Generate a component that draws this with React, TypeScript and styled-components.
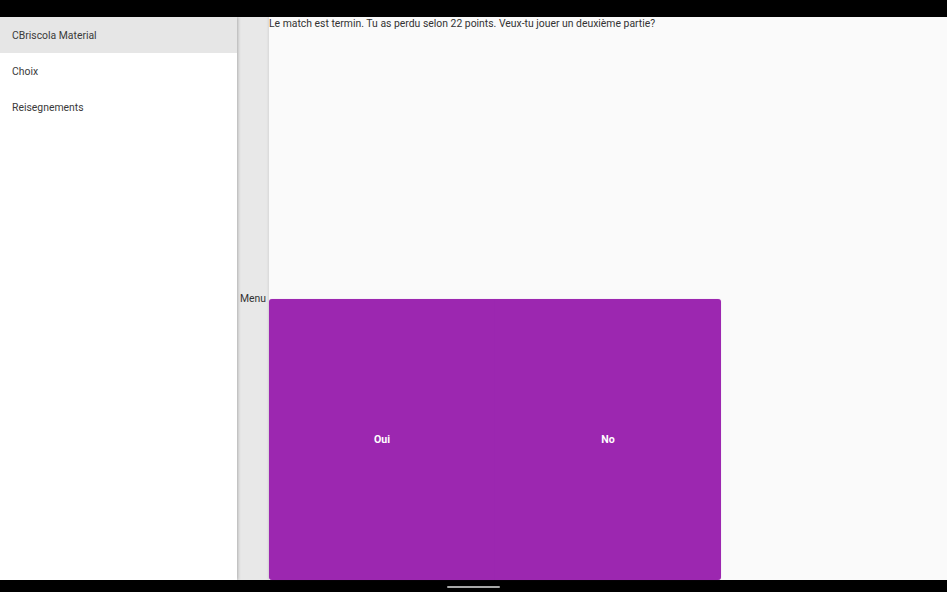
import { createGlobalStyle } from "styled-components";
import styled from "styled-components";

const GlobalStyle = createGlobalStyle`
  html, body {
    margin: 0;
    padding: 0;
    background: #000;
    font-family: Roboto, "Noto Sans", sans-serif;
  }
`;

const Screen = styled.div`
  width: 947px;
  height: 592px;
  display: flex;
  flex-direction: column;
  background: #000;
  overflow: hidden;
`;

const StatusBar = styled.div`
  height: 17px;
  background: #000;
`;

const Body = styled.div`
  flex: 1;
  display: flex;
  min-height: 0;
`;

const Drawer = styled.nav`
  width: 237px;
  background: #fff;
  display: flex;
  flex-direction: column;
  box-shadow: 1px 0 3px rgba(0, 0, 0, 0.25);
  position: relative;
  z-index: 2;
`;

const DrawerItem = styled.div<{ active?: boolean }>`
  height: 36px;
  display: flex;
  align-items: center;
  padding-left: 12px;
  font-size: 10.4px;
  color: #3a3a3a;
  background: ${(p) => (p.active ? "#e6e6e6" : "#fff")};
`;

const Strip = styled.div`
  width: 32px;
  background: #e8e8e8;
  display: flex;
  align-items: center;
  justify-content: flex-end;
  padding-right: 3px;
  box-sizing: border-box;
  font-size: 10.4px;
  color: #333;
`;

const Main = styled.main`
  flex: 1;
  background: #fafafa;
  display: flex;
  flex-direction: column;
  box-shadow: -1px 0 2px rgba(0, 0, 0, 0.08);
  position: relative;
  z-index: 1;
`;

const Message = styled.div`
  flex: 1;
  font-size: 10.4px;
  line-height: 13px;
  color: #333;
`;

const ButtonRow = styled.div`
  flex: 1;
  width: 452px;
  display: flex;
`;

const Choice = styled.button<{ side: "left" | "right" }>`
  flex: 1;
  border: none;
  margin: 0;
  background: #9c27b0;
  color: #fff;
  font-family: Roboto, "Noto Sans", sans-serif;
  font-weight: 700;
  font-size: 10.6px;
  border-radius: ${(p) => (p.side === "left" ? "3px 0 0 3px" : "0 3px 3px 0")};
  box-shadow: 0 0 1px rgba(156, 39, 176, 0.4);
`;

const NavBar = styled.div`
  height: 12px;
  background: #000;
  display: flex;
  justify-content: center;
  align-items: center;
`;

const HomeIndicator = styled.div`
  width: 53px;
  height: 2px;
  border-radius: 1px;
  background: #a8a8a8;
  margin-top: 2px;
`;

export default function App() {
  return (
    <>
      <GlobalStyle />
      <Screen>
        <StatusBar />
        <Body>
          <Drawer>
            <DrawerItem active>CBriscola Material</DrawerItem>
            <DrawerItem>Choix</DrawerItem>
            <DrawerItem>Reisegnements</DrawerItem>
          </Drawer>
          <Strip>Menu</Strip>
          <Main>
            <Message>
              Le match est termin. Tu as perdu selon 22 points. Veux-tu jouer un deuxième partie?
            </Message>
            <ButtonRow>
              <Choice side="left">Oui</Choice>
              <Choice side="right">No</Choice>
            </ButtonRow>
          </Main>
        </Body>
        <NavBar>
          <HomeIndicator />
        </NavBar>
      </Screen>
    </>
  );
}
